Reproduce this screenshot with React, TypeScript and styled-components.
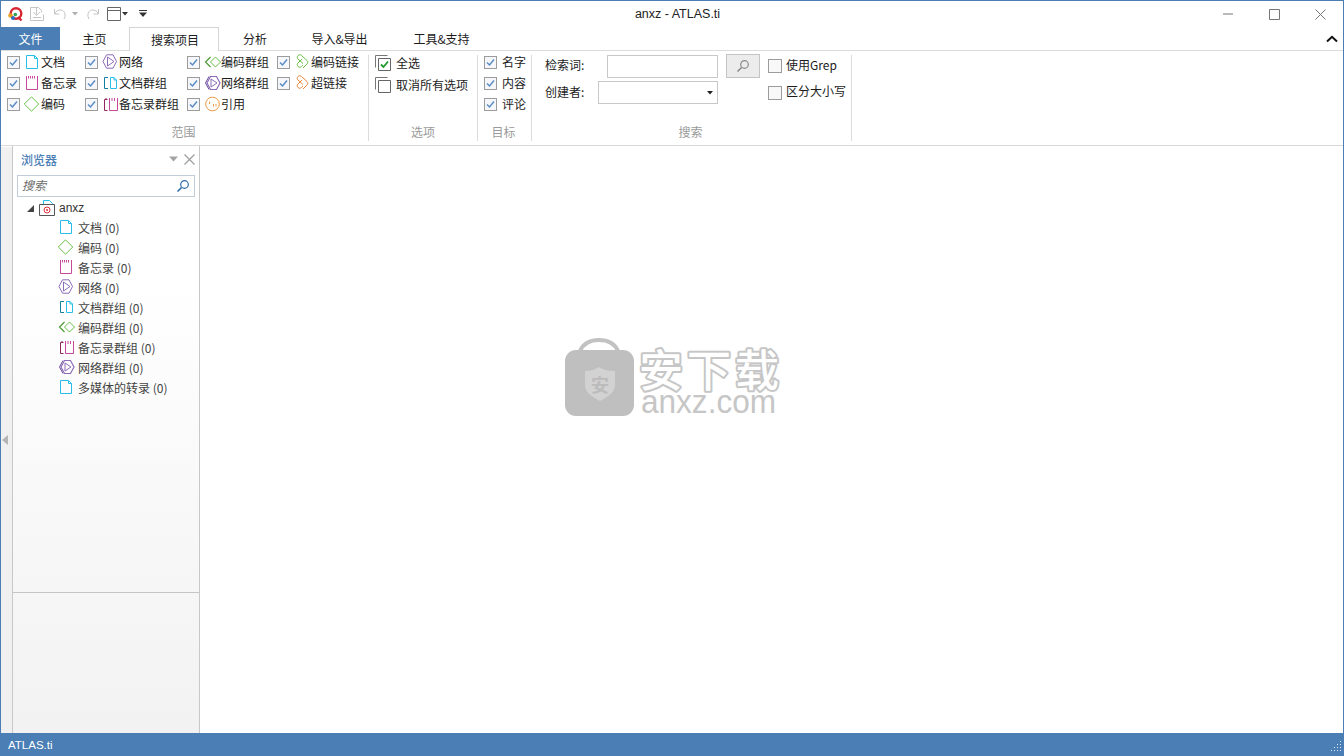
import React from "react";
import styled, { createGlobalStyle } from "styled-components";

const Global = createGlobalStyle`
  html, body { margin: 0; padding: 0; overflow: hidden; background: #fff; }
  * { box-sizing: border-box; }
  svg { overflow: visible; flex: none; }
  body { font-family: "Noto Sans CJK SC", "Liberation Sans", sans-serif; font-size: 12px; color: #1c1c1c; }
`;

const Win = styled.div`
  width: 1344px; height: 756px; display: flex; flex-direction: column;
  border: 1px solid #4a7eb5; border-bottom: 0; background: #fff;
`;
const TitleBar = styled.div`
  height: 26px; flex: none; display: grid; grid-template-columns: 1fr auto 1fr; align-items: center;
`;
const Quick = styled.div`display: flex; align-items: center; height: 26px;`;
const QuickSlot = styled.span<{ $w: number }>`
  width: ${p => p.$w}px; height: 26px; display: flex; align-items: center; justify-content: center; flex: none;
`;
const Title = styled.div`
  font-family: "Liberation Sans", sans-serif; font-size: 12.5px; color: #222; margin-left: 11px;
`;
const WinCtl = styled.div`display: flex; justify-content: flex-end; align-items: center; height: 26px;`;
const CtlSlot = styled.span<{ $w: number }>`
  width: ${p => p.$w}px; height: 26px; display: flex; align-items: center; justify-content: center; flex: none;
`;
const TabRow = styled.div`
  height: 24px; flex: none; display: flex; align-items: stretch; border-bottom: 1px solid #dcdcdc; position: relative;
`;
const Tab = styled.div<{ $w: number; $file?: boolean; $on?: boolean; $pl?: number }>`
  width: ${p => p.$w}px; display: flex; align-items: center; justify-content: center; font-size: 12px; line-height: 14px;
  flex: none; padding-left: ${p => p.$pl ?? 0}px;
  background: ${p => (p.$file ? "#4a7eb5" : "#fff")};
  color: ${p => (p.$file ? "#fff" : "#1c1c1c")};
  ${p => p.$on ? "border: 1px solid #d4d4d4; border-bottom: 0; height: 24px;" : "height: 23px;"}
`;
const Chevron = styled.span`
  margin-left: auto; width: 22px; display: flex; align-items: center; justify-content: center;
`;
const Ribbon = styled.div`
  height: 95px; flex: none; display: flex; align-items: flex-start; padding-top: 4px; border-bottom: 1px solid #d8d8d8;
`;
const Group = styled.section<{ $w: number; $pl: number }>`
  width: ${p => p.$w}px; height: 86px; padding-left: ${p => p.$pl}px; border-right: 1px solid #dcdcdc;
  display: flex; flex-direction: column; flex: none;
`;
const GroupBody = styled.div<{ $gap?: number; $row?: boolean }>`
  flex: 1; display: flex; min-height: 0;
  flex-direction: ${p => (p.$row ? "row" : "column")};
  gap: ${p => p.$gap ?? 0}px;
`;
const GroupName = styled.div<{ $ml: number }>`
  height: 18px; line-height: 18px; font-size: 12px; color: #9a9a9a; text-align: center; margin-left: -${p => p.$ml}px; flex: none;
`;
const Col = styled.div<{ $w: number }>`
  width: ${p => p.$w}px; display: flex; flex-direction: column; gap: 7px; flex: none;
`;
const Row = styled.div`
  height: 14px; display: flex; align-items: center; white-space: nowrap; line-height: 14px; font-size: 12px;
`;
const Box = styled.span`
  width: 13px; height: 13px; border: 1px solid #9c9c9c; background: #f5f7fa; flex: none;
  display: flex; align-items: center; justify-content: center;
`;
const IconSlot = styled.span`
  width: 20px; height: 16px; margin-left: 1px; display: flex; align-items: center; justify-content: center; flex: none;
`;
const Gap = styled.span<{ $w: number }>`width: ${p => p.$w}px; flex: none;`;
const StackRows = styled.div`display: flex; flex-direction: column; gap: 6px;`;
const StackRow = styled.div`height: 16px; display: flex; align-items: center; gap: 5px; white-space: nowrap;`;
const Lifted = styled.span<{ $b: number }>`line-height: 14px; margin-bottom: ${p => p.$b}px;`;
const SearchRow = styled.div<{ $top: number; $h: number }>`
  display: flex; align-items: center; height: ${p => p.$h}px; margin-top: ${p => p.$top}px; white-space: nowrap;
`;
const FieldLabel = styled.span<{ $w: number }>`width: ${p => p.$w}px; flex: none; color: #222; line-height: 14px; margin-bottom: 2px;`;
const Field = styled.div<{ $w: number }>`
  width: ${p => p.$w}px; height: 23px; border: 1px solid #c8c8c8; background: #fff; flex: none;
  display: flex; align-items: center; justify-content: flex-end; padding-right: 4px;
`;
const GoBtn = styled.div`
  width: 34px; height: 24px; border: 1px solid #c4c4c4; background: #ececec; margin-left: 8px; margin-right: 8px;
  display: flex; align-items: center; justify-content: center; flex: none;
`;
const PlainBox = styled(Box)`background: #f8f8f8; width: 14px; height: 14px; margin-right: 4px;`;

const Body = styled.div`flex: 1; min-height: 0; display: flex;`;
const Strip = styled.div`
  width: 11px; flex: none; background: #f0f0f0; margin-top: 1px; display: flex; align-items: center; justify-content: center;
  padding-right: 3px;
`;
const Side = styled.aside`
  width: 188px; flex: none; border-left: 1px solid #c8c8c8; border-right: 1px solid #c8c8c8; margin-top: 0;
  display: flex; flex-direction: column;
`;
const SideTop = styled.div`
  height: 447px; flex: none; background: linear-gradient(#ffffff 30%, #f6f6f6 100%); border-bottom: 1px solid #c4c4c4;
  display: flex; flex-direction: column;
`;
const SideBottom = styled.div`flex: 1; background: linear-gradient(#f6f6f6, #f2f2f2);`;
const SideHead = styled.div`
  height: 29px; display: flex; align-items: center; padding: 0 4px 3px 8px; flex: none;
`;
const SideTitle = styled.span`color: #4a7eb5; font-size: 12px; font-weight: 500; flex: 1;`;
const SideSearch = styled.div`
  height: 22px; margin: 0 4px; border: 1px solid #c0ccd8; background: #fff; flex: none; display: flex; align-items: center;
  padding: 0 4px 0 4px; justify-content: space-between;
`;
const Placeholder = styled.span`font-style: italic; color: #6c6c6c; font-size: 12px; line-height: 14px; margin-bottom: 2px;`;
const Tree = styled.div`display: flex; flex-direction: column;`;
const RootRow = styled.div`
  height: 20px; display: flex; align-items: center; padding: 2px 0 0 14px; font-size: 12px; color: #333;
`;
const RootName = styled.span`font-family: "Liberation Sans", sans-serif; font-size: 12px; margin-left: 2px;`;
const Node = styled.div`
  height: 20px; display: flex; align-items: center; padding-left: 44px; color: #444; font-size: 12px; white-space: nowrap;
`;
const NodeIcon = styled.span`width: 21px; height: 16px; display: flex; align-items: center; flex: none;`;
const Main = styled.main`flex: 1; min-width: 0; background: #fff; padding: 190px 0 0 364px;`;
const Status = styled.footer`
  height: 23px; flex: none; margin: 0 -1px; background: #4a7eb5; color: #fff; display: flex; align-items: center;
  justify-content: space-between; padding: 0 2px 0 8px; font-family: "Liberation Sans", sans-serif; font-size: 11.5px;
`;

type P = { w?: number; h?: number; vb?: string; children: React.ReactNode };
const Ic = ({ w = 16, h = 16, vb, children }: P) => (
  <svg width={w} height={h} viewBox={vb ?? `0 0 ${w} ${h}`} fill="none" strokeWidth="1">{children}</svg>
);

const Doc = () => <Ic><path d="M3.500 1.500h8l3 3v10h-11zM11.500 1.500v3h3" stroke="#27bfe8" /></Ic>;
const Memo = () => <Ic><path d="M3.500 2v12.500h11V2" stroke="#c9489a" /><path d="M3.500 1v1M5.500 1v2.500M7.500 1v2.500M9.500 1v2.500M11.500 1v2.500M14.500 1v1" stroke="#c9489a" /></Ic>;
const Code = () => <Ic><path d="M8.500.8 15.700 8 8.500 15.200 1.300 8z" stroke="#69bf45" /></Ic>;
const Net = () => <Ic><path d="M5.500.8H12L15.500 7.500 12 14.200H5.500L2 7.500z" stroke="#8d6cb8" /><path d="M6.500 3 13 7.500 6.500 12z" stroke="#8d6cb8" /></Ic>;
const DocGrp = () => <Ic><path d="M7 2.500H3.500v11H7" stroke="#127f9c" /><path d="M9.500 2.500H13l2.500 2.500v8.500h-6zM13 2.500V5h2.500" stroke="#27bfe8" /></Ic>;
const MemoGrp = () => <Ic><path d="M6.500 3.500h-3v11h3" stroke="#93285f" /><path d="M5 2v2" stroke="#93285f" /><path d="M8.500 3v11.500h8V3" stroke="#c9489a" /><path d="M8.500 2v1M11 2v3M13.500 2v3M16.500 2v1" stroke="#c9489a" /></Ic>;
const CodeGrp = () => <Ic><path d="M7.500 3 2.500 8l5 5" stroke="#4f9a35" strokeWidth="1.200" /><path d="M12.500 3 17.500 8l-5 5L7.500 8z" stroke="#69bf45" /></Ic>;
const NetGrp = () => <Ic><path d="M6 1.500 2.500 8 6 14.500" stroke="#6b4b9c" /><path d="M7.500 1.500H13.500L17 8l-3.500 6.500H7.500L4 8z" stroke="#8d6cb8" strokeWidth="1.200" /><path d="M8 4 14 8 8 12z" stroke="#8d6cb8" /></Ic>;
const Link = ({ c }: { c: string }) => (
  <Ic>
    <path d="M10 9.500 5 5c-1-1-1-2.500 0-3.500s2.500-1 3.500 0L14 6.500c1 1 1 2.500 0 3.500l-4 4" stroke={c} />
    <path d="M9 5 5 9c-1 1-1 2.500 0 3.500s2.500 1 3.500 0l1.500-1.500" stroke={c} />
  </Ic>
);
const Quote = () => <Ic><circle cx="9.500" cy="8" r="6.800" stroke="#e89a45" /><path d="M6.500 5.500V8M10.500 8v2.500M13 8v2.500" stroke="#e89a45" /></Ic>;

const Check = () => <Ic w={11} h={11}><path d="M2 5.500 4.500 8 9 2.500" stroke="#5b8cc4" strokeWidth="1.500" /></Ic>;
const Opt = ({ icon, label }: { icon: React.ReactNode; label: string }) => (
  <Row><Box><Check /></Box><IconSlot>{icon}</IconSlot>{label}</Row>
);
const Stack = ({ on }: { on?: boolean }) => (
  <Ic>
    <path d="M.5 12.500V.5h12" stroke="#777" />
    <path d="M3.500 3.500h12v12h-12z" stroke="#666" fill="#fff" />
    {on && <path d="M6 9.500 8.500 12 13 6.500" stroke="#1f9a2a" strokeWidth="1.800" />}
  </Ic>
);

const Logo = () => (
  <Ic vb="0 0 16 16">
    <circle cx="9" cy="7.500" r="5.300" stroke="#d8262f" strokeWidth="2.400" />
    <path d="M11 11l3.500 3.500" stroke="#d8262f" strokeWidth="2.400" />
    <circle cx="3.500" cy="9.500" r="2.300" fill="#e8a020" />
    <circle cx="6" cy="12" r="2" fill="#2d6fc0" />
    <circle cx="8.300" cy="8.500" r="1.800" fill="#30a050" />
  </Ic>
);
const Save = () => (
  <Ic w={15} h={16}>
    <path d="M.5 1.500h8l3 3v2M.5 1.500v13h13v-6" stroke="#c4c4c4" />
    <path d="M6.500 1.500v7M3.500 6 6.500 9.500 10 6" stroke="#c4c4c4" />
    <path d="M3 11.500h8" stroke="#c4c4c4" />
  </Ic>
);
const Undo = () => <Ic w={14} h={14}><path d="M1.500 2v5h5M1.500 7C3 4 5 3 7.500 3c3 0 5 2.500 4.500 6.500l-1 2.500" stroke="#c4c4c4" /></Ic>;
const Redo = () => <Ic w={14} h={14}><path d="M12.500 2v5h-5M12.500 7C11 4 9 3 6.500 3c-3 0-5 2.500-4.500 6.500l1 2.500" stroke="#c4c4c4" /></Ic>;
const Caret = ({ c = "#333" }: { c?: string }) => <Ic w={6} h={4}><path d="M0 0h6L3 3.500z" fill={c} /></Ic>;
const WinIcon = () => <Ic w={14} h={14}><path d="M.5.5h13v13H.5z" stroke="#666" /><path d="M1 3.500h12" stroke="#666" /></Ic>;
const Customize = () => <Ic w={8} h={8}><path d="M0 .5h8" stroke="#333" /><path d="M0 2.500h8L4 7z" fill="#333" /></Ic>;
const Lens = ({ c }: { c: string }) => <Ic w={14} h={14}><circle cx="8.500" cy="5.500" r="3.800" stroke={c} strokeWidth="1.200" /><path d="M5.500 8.500 1.500 12.500" stroke={c} strokeWidth="1.600" /></Ic>;
const Root = () => (
  <Ic w={18} h={18}>
    <path d="M4.500 5V1.500h6l3 3v1" stroke="#27bfe8" />
    <path d="M.5 5.500h15v11H.5z" stroke="#555" fill="#fff" />
    <circle cx="8" cy="11" r="3" stroke="#e0303a" />
    <circle cx="8" cy="11" r="1" fill="#e0303a" />
  </Ic>
);
const Grip = () => (
  <Ic w={12} h={12}>
    {[[10, 2], [7, 5], [10, 5], [4, 8], [7, 8], [10, 8], [1, 11], [4, 11], [7, 11], [10, 11]].map(([x, y]) => (
      <rect key={`${x}-${y}`} x={x} y={y} width="1" height="1" fill="#dbe6f2" />
    ))}
  </Ic>
);
const Watermark = () => (
  <svg width="216" height="80" viewBox="0 0 216 80">
    <path d="M16 15C20 6 27 4 35 4s15 2 19 11" fill="none" stroke="#c2c2c2" strokeWidth="4" />
    <rect x="1" y="14" width="69" height="66" rx="11" fill="#bfbfbf" />
    <path d="M21 35c6 0 10-1.500 14-4 4 2.500 8 4 16 4v14c0 8-8 12-15 16-7-4-15-8-15-16z" fill="#d2d2d2" />
    <text x="36" y="56" textAnchor="middle" fontSize="18" fontWeight="700" fill="#bcbcbc" fontFamily="Noto Sans CJK SC">安</text>
    <text
      x="75" y="51" fontSize="44" fontWeight="500" letterSpacing="4" fill="#fff" stroke="#c6c6c6" strokeWidth="4"
      strokeLinejoin="round" paintOrder="stroke" fontFamily="Noto Sans CJK SC"
    >安下载</text>
    <text
      x="77" y="77" fontSize="33" fill="#c6c6c6" fontFamily="Liberation Sans" textLength="135" lengthAdjust="spacingAndGlyphs"
    >anxz.com</text>
  </svg>
);

const scope: [React.ReactNode, string][][] = [
  [[<Doc />, "文档"], [<Memo />, "备忘录"], [<Code />, "编码"]],
  [[<Net />, "网络"], [<DocGrp />, "文档群组"], [<MemoGrp />, "备忘录群组"]],
  [[<CodeGrp />, "编码群组"], [<NetGrp />, "网络群组"], [<Quote />, "引用"]],
  [[<Link c="#69bf45" />, "编码链接"], [<Link c="#e8883a" />, "超链接"]],
];
const colW = [78, 102, 90, 84];
const nodes: [React.ReactNode, string][] = [
  [<Doc />, "文档 (0)"], [<Code />, "编码 (0)"], [<Memo />, "备忘录 (0)"], [<Net />, "网络 (0)"],
  [<DocGrp />, "文档群组 (0)"], [<CodeGrp />, "编码群组 (0)"], [<MemoGrp />, "备忘录群组 (0)"], [<NetGrp />, "网络群组 (0)"],
  [<Doc />, "多媒体的转录 (0)"],
];

export default function App() {
  return (
    <>
      <Global />
      <Win>
        <TitleBar>
          <Quick>
            <Gap $w={5} />
            <QuickSlot $w={17}><Logo /></QuickSlot>
            <Gap $w={7} />
            <QuickSlot $w={15}><Save /></QuickSlot>
            <Gap $w={8} />
            <QuickSlot $w={14}><Undo /></QuickSlot>
            <Gap $w={5} />
            <QuickSlot $w={6}><Caret c="#b0b0b0" /></QuickSlot>
            <Gap $w={8} />
            <QuickSlot $w={14}><Redo /></QuickSlot>
            <Gap $w={6} />
            <QuickSlot $w={15}><WinIcon /></QuickSlot>
            <Gap $w={1} />
            <QuickSlot $w={6}><Caret /></QuickSlot>
            <Gap $w={10} />
            <QuickSlot $w={9}><Customize /></QuickSlot>
          </Quick>
          <Title>anxz - ATLAS.ti</Title>
          <WinCtl>
            <CtlSlot $w={46}><Ic w={10} h={2}><path d="M0 1h10" stroke="#a8a8a8" strokeWidth="1.600" /></Ic></CtlSlot>
            <CtlSlot $w={46}><Ic w={11} h={11}><path d="M.5.5h10v10H.5z" stroke="#777" /></Ic></CtlSlot>
            <CtlSlot $w={46}><Ic w={11} h={11}><path d="M.5.5l10 10M10.500.5l-10 10" stroke="#777" /></Ic></CtlSlot>
          </WinCtl>
        </TitleBar>
        <TabRow>
          <Tab $w={59} $file>文件</Tab>
          <Tab $w={69}>主页</Tab>
          <Tab $w={90} $on $pl={2}>搜索项目</Tab>
          <Tab $w={70} $pl={2}>分析</Tab>
          <Tab $w={101}>导入&amp;导出</Tab>
          <Tab $w={103}>工具&amp;支持</Tab>
          <Chevron><Ic w={12} h={8}><path d="M1 6.500 6 1.800l5 4.700" stroke="#111" strokeWidth="2" /></Ic></Chevron>
        </TabRow>
        <Ribbon>
          <Group $w={368} $pl={6}>
            <GroupBody $row>
              {scope.map((col, i) => (
                <Col key={i} $w={colW[i]}>
                  {col.map(([ic, t]) => <Opt key={t} icon={ic} label={t} />)}
                </Col>
              ))}
            </GroupBody>
            <GroupName $ml={8}>范围</GroupName>
          </Group>
          <Group $w={109} $pl={6}>
            <GroupBody>
              <StackRows>
                <StackRow><Stack on /><Lifted $b={0}>全选</Lifted></StackRow>
                <StackRow><Stack /><Lifted $b={0}>取消所有选项</Lifted></StackRow>
              </StackRows>
            </GroupBody>
            <GroupName $ml={6}>选项</GroupName>
          </Group>
          <Group $w={54} $pl={6}>
            <GroupBody>
              <Col $w={46}>
                {["名字", "内容", "评论"].map(t => (
                  <Row key={t}><Box><Check /></Box><Gap $w={5} />{t}</Row>
                ))}
              </Col>
            </GroupBody>
            <GroupName $ml={8}>目标</GroupName>
          </Group>
          <Group $w={320} $pl={13}>
            <GroupBody>
              <SearchRow $top={-1} $h={24}>
                <FieldLabel $w={62}>检索词:</FieldLabel>
                <Field $w={111} />
                <GoBtn><Lens c="#8a8a8a" /></GoBtn>
                <PlainBox /><Lifted $b={3}>使用Grep</Lifted>
              </SearchRow>
              <SearchRow $top={3} $h={23}>
                <FieldLabel $w={53}>创建者:</FieldLabel>
                <Field $w={120}><Caret c="#222" /></Field>
                <Gap $w={50} />
                <PlainBox /><Lifted $b={3}>区分大小写</Lifted>
              </SearchRow>
            </GroupBody>
            <GroupName $ml={15}>搜索</GroupName>
          </Group>
        </Ribbon>
        <Body>
          <Strip><Ic w={6} h={10}><path d="M6 0v10L0 5z" fill="#b4b4b4" /></Ic></Strip>
          <Side>
            <SideTop>
              <SideHead>
                <SideTitle>浏览器</SideTitle>
                <Ic w={9} h={6}><path d="M0 .5h9L4.500 5.500z" fill="#a4a4a4" /></Ic>
                <Gap $w={6} />
                <Ic w={11} h={11}><path d="M.5.5l10 10M10.500.5l-10 10" stroke="#a0a0a0" strokeWidth="1.300" /></Ic>
              </SideHead>
              <SideSearch>
                <Placeholder>搜索</Placeholder>
                <Lens c="#2a6aa8" />
              </SideSearch>
              <Tree>
                <RootRow>
                  <Ic w={7} h={7}><path d="M7 0v7H0z" fill="#444" /></Ic>
                  <Gap $w={5} />
                  <Root />
                  <RootName>anxz</RootName>
                </RootRow>
                {nodes.map(([ic, t]) => (
                  <Node key={t}><NodeIcon>{ic}</NodeIcon>{t}</Node>
                ))}
              </Tree>
            </SideTop>
            <SideBottom />
          </Side>
          <Main>
            <Watermark />
          </Main>
        </Body>
        <Status>
          <span>ATLAS.ti</span>
          <Grip />
        </Status>
      </Win>
    </>
  );
}
